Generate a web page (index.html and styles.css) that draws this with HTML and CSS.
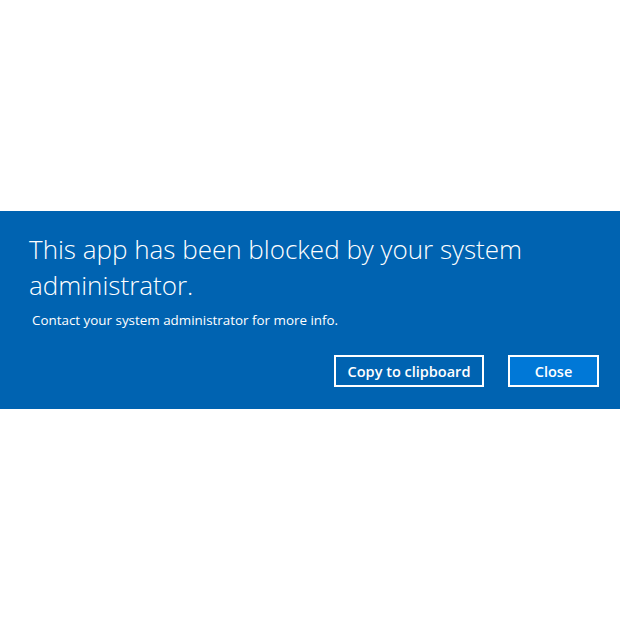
FILE: index.html
```html
<!DOCTYPE html>
<html lang="en">
<head>
<meta charset="utf-8">
<title>Blocked</title>
<link rel="stylesheet" href="styles.css">
</head>
<body>
<div class="page">
  <section class="banner">
    <h1 class="title">This app has been blocked by your system administrator.</h1>
    <p class="subtitle">Contact your system administrator for more info.</p>
    <div class="actions">
      <button class="btn btn-secondary">Copy to clipboard</button>
      <button class="btn btn-primary">Close</button>
    </div>
  </section>
</div>
</body>
</html>
```
FILE: styles.css
```css
html, body {
  margin: 0;
  padding: 0;
  background: #ffffff;
}
.page {
  height: 620px;
  display: flex;
  align-items: center;
  font-family: "Open Sans", "Noto Sans", sans-serif;
}
.banner {
  width: 100%;
  height: 198px;
  box-sizing: border-box;
  background: #0063b1;
  color: #ffffff;
  padding: 20px 21px 22px 29px;
  display: flex;
  flex-direction: column;
}
.title {
  margin: 0;
  font-size: 26px;
  font-weight: 300;
  line-height: 36px;
  max-width: 520px;
}
.subtitle {
  margin: 7px 0 0 3px;
  font-size: 13.4px;
  font-weight: 400;
  line-height: 20px;
}
.actions {
  margin-top: auto;
  display: flex;
  justify-content: flex-end;
  gap: 24px;
}
.btn {
  height: 32px;
  box-sizing: border-box;
  border: 2px solid #ffffff;
  color: #ffffff;
  font-family: "Open Sans", "Noto Sans", sans-serif;
  font-size: 14.5px;
  font-weight: 600;
  padding: 0;
}
.btn-secondary {
  width: 150px;
  background: #0063b1;
}
.btn-primary {
  width: 91px;
  background: #0078d7;
}
```
